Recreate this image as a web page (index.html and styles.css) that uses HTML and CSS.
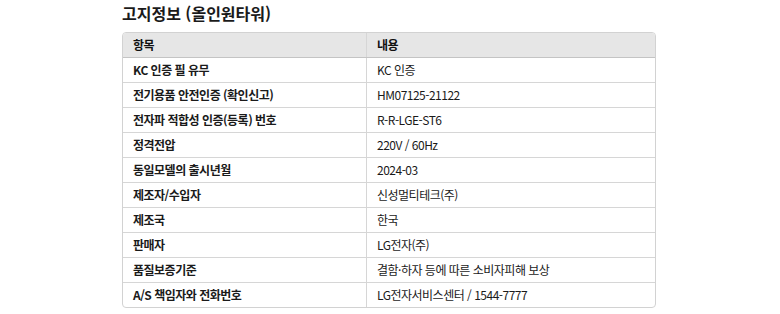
FILE: index.html
```html
<!DOCTYPE html>
<html lang="ko">
<head>
<meta charset="utf-8">
<link rel="stylesheet" href="styles.css">
</head>
<body>
<section class="notice">
  <h2 class="title">고지정보 (올인원타워)</h2>
  <div class="table-wrap">
    <table class="info">
      <thead>
        <tr><th class="c1">항목</th><th>내용</th></tr>
      </thead>
      <tbody>
        <tr><td class="c1">KC 인증 필 유무</td><td>KC 인증</td></tr>
        <tr><td class="c1">전기용품 안전인증 (확인신고)</td><td>HM07125-21122</td></tr>
        <tr><td class="c1">전자파 적합성 인증(등록) 번호</td><td>R-R-LGE-ST6</td></tr>
        <tr><td class="c1">정격전압</td><td>220V / 60Hz</td></tr>
        <tr><td class="c1">동일모델의 출시년월</td><td>2024-03</td></tr>
        <tr><td class="c1">제조자/수입자</td><td>신성멀티테크(주)</td></tr>
        <tr><td class="c1">제조국</td><td>한국</td></tr>
        <tr><td class="c1">판매자</td><td>LG전자(주)</td></tr>
        <tr><td class="c1">품질보증기준</td><td>결함·하자 등에 따른 소비자피해 보상</td></tr>
        <tr><td class="c1">A/S 책임자와 전화번호</td><td>LG전자서비스센터 / 1544-7777</td></tr>
      </tbody>
    </table>
  </div>
</section>
</body>
</html>
```
FILE: styles.css
```css
html, body {
  margin: 0;
  padding: 0;
  background: #ffffff;
}
body {
  font-family: "Noto Sans CJK KR", "Noto Sans", sans-serif;
  color: #111;
}
.notice {
  width: 534px;
  margin: 0 auto 0 122px;
  padding-top: 3px;
}
.title {
  margin: 0 0 8px 0;
  font-size: 16px;
  font-weight: 700;
  line-height: 21px;
  color: #1a1a1a;
}
.table-wrap {
  border: 1px solid #d2d2d2;
  border-radius: 4px;
  overflow: hidden;
}
.info {
  width: 100%;
  border-collapse: collapse;
  table-layout: fixed;
  font-size: 12px;
  letter-spacing: -0.5px;
}
.info th, .info td {
  height: 24px;
  padding: 0 10px;
  text-align: left;
  vertical-align: middle;
  line-height: 16px;
  border-bottom: 1px solid #d6d6d6;
  white-space: nowrap;
}
.info tr:last-child td {
  border-bottom: none;
}
.info th {
  background: #e6e6e6;
  font-weight: 700;
  border-bottom: 1px solid #c4c4c4;
}
.info .c1 {
  width: 223px;
  border-right: 1px solid #d6d6d6;
  font-weight: 700;
}
.info td {
  color: #1a1a1a;
}
```
